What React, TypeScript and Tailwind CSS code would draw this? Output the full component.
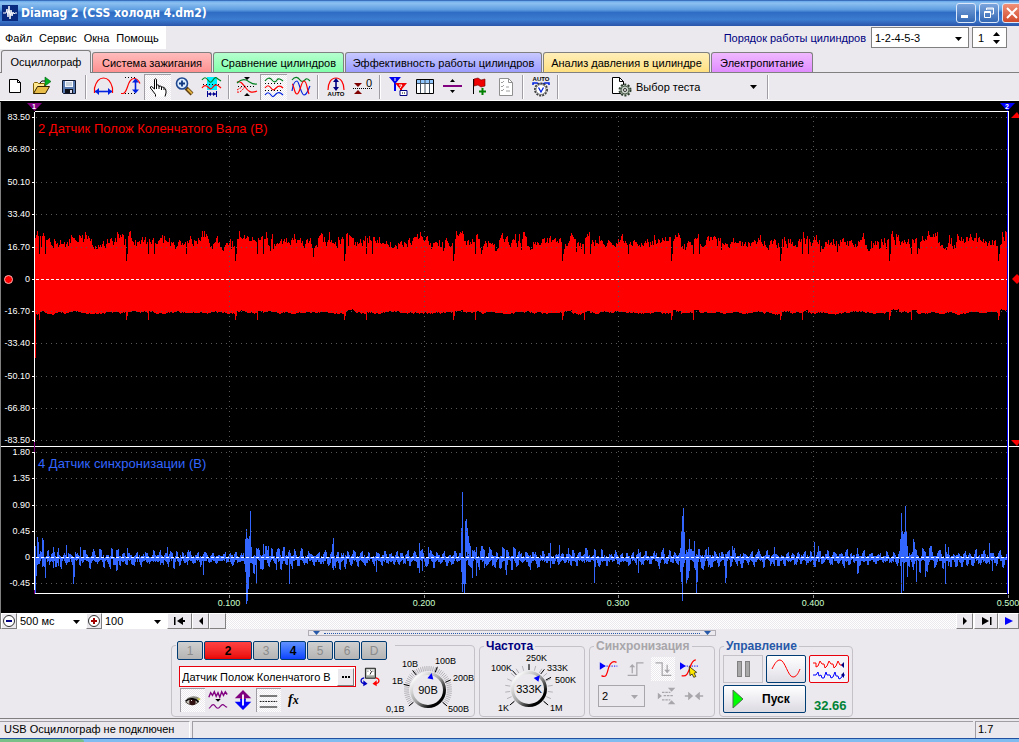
import { useState } from 'react';
import type { ReactNode } from 'react';
import { clsx } from 'clsx';

interface Tab {
  label: string;
  className: string;
}

const tabs: Tab[] = [
  { label: 'Осциллограф', className: 'w-[90px]' },
  { label: 'Система зажигания', className: 'w-[120px] bg-linear-to-b from-[#ffbcbc] to-[#ff9090]' },
  { label: 'Сравнение цилиндров', className: 'w-[131px] bg-linear-to-b from-[#b4ffce] to-[#80ffaa]' },
  { label: 'Эффективность работы цилиндров', className: 'w-[197px] bg-linear-to-b from-[#c8c8ff] to-[#9c9cff]' },
  { label: 'Анализ давления в цилиндре', className: 'w-[167px] bg-linear-to-b from-[#ffeeb8] to-[#ffe080]' },
  { label: 'Электропитание', className: 'w-[102px] bg-linear-to-b from-[#f0b8ff] to-[#e08cff]' },
];

const menuItems = ['Файл', 'Сервис', 'Окна', 'Помощь'];

const dither = 'bg-[repeating-conic-gradient(#ffffff_0_25%,#ebe9ed_0_50%)] bg-[length:2px_2px]';

/* ---------- Icons ---------- */

interface IconProps {
  children: ReactNode;
  size?: number;
}

function Icon({ children, size = 24 }: IconProps) {
  return (
    <svg width={size} height={size} viewBox="0 0 24 24" fill="none" className="shrink-0" aria-hidden="true">
      {children}
    </svg>
  );
}

const NewIcon = (
  <Icon>
    <path d="M6.5 4.5h8l3 3v10h-11z" fill="#fff" stroke="#000" />
    <path d="M14.5 4.5v3h3" stroke="#000" />
  </Icon>
);

const OpenIcon = (
  <Icon>
    <path d="M3.5 18.5v-10l1-1h3l1 1h6v3" fill="#ffe890" stroke="#806000" />
    <path d="M3.5 18.5l4-7h12l-4 7z" fill="#e8bc48" stroke="#302000" />
    <path d="M15 2l6 4.5-6 4.5z" fill="#00b020" stroke="#006010" strokeWidth=".6" />
    <path d="M10 8q1-3 5-2" stroke="#000" />
  </Icon>
);

const SaveIcon = (
  <Icon>
    <path d="M5.5 5.5h13v13h-12l-1-1z" fill="#5878b0" stroke="#101830" />
    <path d="M8 6h8v6H8z" fill="#f4f6ff" />
    <path d="M9 8h6M9 10h6" stroke="#9ab" />
    <path d="M8 14h8v4H8z" fill="#101018" />
    <path d="M13 15h2v3h-2z" fill="#dde" />
  </Icon>
);

const WidthIcon = (
  <Icon>
    <path d="M2.5 18V13C4 7 7 3 11.500 3S19 7 20.500 13v5" stroke="#f00" strokeWidth="1.2" />
    <path d="M3 16.500h17" stroke="#0020e0" strokeWidth="1.6" />
    <path d="M3 16.500l4-3.500v7zM20 16.500l-4-3.500v7z" fill="#0020e0" />
  </Icon>
);

const HeightIcon = (
  <Icon>
    <path d="M6 2.500h12M3 18.500h14" stroke="#000" strokeDasharray="1 2" />
    <path d="M2 18.500h2c5 0 4-15 11-15 4 0 5 3 6 5" stroke="#f00" strokeWidth="1.2" />
    <path d="M16.500 5v12" stroke="#0020e0" strokeWidth="1.6" />
    <path d="M16.500 3.500l-3.500 4h7zM16.500 18.500l-3.500-4h7z" fill="#0020e0" />
  </Icon>
);

const HandIcon = (
  <Icon>
    <path
      d="M9.500 21.500v-2l-5-6.500q-.5-1.500 1-1.500l3 2.500V4.500q1-1.500 2 0v6q1-1.300 2.500 0v1q1-1 2.500 0v1q1.200-1 2.500 0 2 1 2 3.500v2l-1 3.500"
      fill="#fff"
      stroke="#000"
    />
    <path d="M10.500 9v5M13 11v3M15.500 12v3M18 13v2" stroke="#000" />
  </Icon>
);

const ZoomIcon = (
  <Icon>
    <path d="M13 13l6 6" stroke="#604010" strokeWidth="4" />
    <path d="M14.500 14l4.500 4.500" stroke="#e0b040" strokeWidth="1.800" />
    <circle cx="9" cy="8.500" r="5.500" fill="#dcecff" stroke="#204890" strokeWidth="1.6" />
    <path d="M6 8.500h6M9 5.500v6" stroke="#103880" strokeWidth="1.800" />
  </Icon>
);

const FragmentIcon = (
  <Icon>
    <path d="M7 2h10v13H7z" fill="#00f0ff" />
    <path d="M2 5c2-3 4-3 6 0s3 3 5 0 3-3 5-1l3 2" stroke="#008020" strokeWidth="1.2" />
    <path d="M3 9.500h18" stroke="#000" strokeDasharray="1 2" />
    <path d="M2 13c2-3 4-3 6-1s3 3 5 0 4-3 8 1" stroke="#f00" strokeWidth="1.2" />
    <path d="M7.500 16v6M16.500 16v6M8 19h8" stroke="#000090" />
    <path d="M8 19l3-2v4zM16 19l-3-2v4z" fill="#000090" />
  </Icon>
);

const AlignIcon = (
  <Icon>
    <path d="M2 7c4-1 5 1 8 5s6 7 12 4" stroke="#f00" strokeWidth="1.2" />
    <path d="M2 8c3-3 6-4 9-3s6 5 11 4" stroke="#008020" strokeWidth="1.2" />
    <path d="M2 17c4 1 6-3 9-7M2 15l5-3" stroke="#f00" strokeDasharray="2 1" />
    <path d="M3 11.500h18" stroke="#000" strokeDasharray="1 2" />
    <path d="M9 2h6l-3 3zM9 21h6l-3-3z" fill="#000" />
  </Icon>
);

const StackedIcon = (
  <Icon>
    <path d="M3 6c2-3 5-4 7-1s4 2 5 0 4-1 6 1" stroke="#008020" strokeWidth="1.2" />
    <path d="M3 8.500h18M3 15.500h18" stroke="#000" strokeDasharray="1 2" />
    <path d="M3 13c2-3 4-3 6 0s3 2 5 0 4-3 7 0" stroke="#f00" strokeWidth="1.2" />
    <path d="M3 20c2-3 4-3 6 0s3 1 5-1 4-2 7 1" stroke="#0020e0" strokeWidth="1.2" />
  </Icon>
);

const OverlapIcon = (
  <Icon>
    <path d="M3 5c3-4 6-3 8 0s5 0 6-1 3 1 4 2" stroke="#008020" strokeWidth="1.2" />
    <path d="M3 16C4 9 6 6 8 6s4 14 7 14 4-5 6-9" stroke="#0020e0" strokeWidth="1.2" />
    <path d="M3 9c2 0 2 10 5 10s4-13 7-13 3 9 5 13" stroke="#f00" strokeWidth="1.2" />
  </Icon>
);

const AutoHeightIcon = (
  <Icon>
    <path d="M4 15C4 8 7 3 12 3s8 5 8 12" stroke="#f00" strokeWidth="1.2" />
    <path d="M12 5v9" stroke="#000080" strokeWidth="1.6" />
    <path d="M12 3l-3 4h6zM12 16l-3-4h6z" fill="#000080" />
    <text x="12" y="21" textAnchor="middle" fontSize="6" fontWeight="700" fill="#000">
      AUTO
    </text>
  </Icon>
);

const ZeroIcon = (
  <Icon>
    <path d="M2 13.500h20" stroke="#000" strokeDasharray="1 1" />
    <path d="M3 8h8l-4 4zM3 19h8l-4-4z" fill="#800000" />
    <text x="18" y="12" textAnchor="middle" fontSize="11" fill="#000">
      0
    </text>
  </Icon>
);

const MarkersIcon = (
  <Icon>
    <path d="M3 2h12l-5 6v8H8V8z" fill="#0000f0" />
    <path d="M9 8h12l-5 6v5h-2v-5z" fill="#f00000" />
    <path d="M14 15.500h7v5h-7z" fill="#fff" stroke="#000080" />
    <path d="M16 18h1M18 18h1" stroke="#000" />
    <path d="M9 3v3M13 10h3l-2 3" stroke="#fff" />
  </Icon>
);

const TableIcon = (
  <Icon>
    <path d="M3.500 4.500h17v14h-17z" fill="#fff" stroke="#000" />
    <path d="M4 5h16v3H4z" fill="#90c8ff" />
    <path d="M4 8.500h16M7.500 5v13M12 5v13M16.500 5v13" stroke="#405060" />
  </Icon>
);

const SplitIcon = (
  <Icon>
    <path d="M3 10h19v2H3z" fill="#800080" />
    <path d="M10 7l2.500-3L15 7zM10 15l2.500 3 2.500-3z" fill="#000" />
  </Icon>
);

const FlagIcon = (
  <Icon>
    <path d="M6.500 4v15" stroke="#000" />
    <path d="M7 4l4-1 3 2 4-1v7l-4 1-3-2-4 1z" fill="#f00000" stroke="#600" strokeWidth=".6" />
    <path d="M15.500 13v7M12 16.500h7" stroke="#008000" strokeWidth="2" />
  </Icon>
);

const ReportIcon = (
  <Icon>
    <path d="M5.500 3.500h9l4 4v13h-13z" fill="#fff" stroke="#909090" />
    <path d="M14.500 3.500v4h4" stroke="#909090" />
    <path d="M7 7l1 1 2-2M7 11l1 1 2-2M7 15l1 1 2-2M12 12h3M12 16h4" stroke="#a0a0a0" />
  </Icon>
);

const AutoGaugeIcon = (
  <Icon>
    <text x="12" y="6" textAnchor="middle" fontSize="6" fontWeight="700" fill="#000">
      AUTO
    </text>
    <path d="M4 10V8h4l2 1h4l2-1h4v2" stroke="#0020e0" strokeWidth="1.500" />
    <circle cx="12" cy="14.500" r="6" fill="#fff" stroke="#404040" strokeWidth="2" strokeDasharray="2 1" />
    <circle cx="12" cy="14.500" r="5" fill="#fff" stroke="#808080" />
    <path d="M9.500 12.500L12 17l2.500-4.500" stroke="#0020e0" strokeWidth="1.300" />
  </Icon>
);

const TestIcon = (
  <Icon>
    <path d="M4.500 2.500h7l4 4v12h-11z" fill="#fff" stroke="#000" />
    <path d="M11.500 2.500v4h4" stroke="#000" />
    <circle cx="17" cy="15" r="5.500" fill="#b8c4b8" stroke="#304030" strokeWidth="2" strokeDasharray="2 1.500" />
    <circle cx="17" cy="15" r="4" fill="#c8d2c8" stroke="#506050" />
    <circle cx="17" cy="15" r="1.500" fill="#fff" stroke="#000" strokeWidth=".8" />
  </Icon>
);

const SwapIcon = (
  <Icon size={20}>
    <path d="M6.500 1.500h12v12h-12z" fill="#a0a8a0" stroke="#000" />
    <path d="M8 3h9v7H8z" fill="#fff" />
    <path d="M9 5h1M12 4h1M15 5h1M12 9l2-4" stroke="#000" />
    <path d="M5 13c-5 1-5 6 0 7" stroke="#0000c0" strokeWidth="1.500" />
    <path d="M4 16l5 4-5 3z" fill="#0000c0" />
    <path d="M19 13c5 1 5 6 0 7" stroke="#f00" strokeWidth="1.500" />
    <path d="M20 16l-5 4 5 3z" fill="#f00" />
  </Icon>
);

const EyeIcon = (
  <Icon size={22}>
    <path d="M6 10c4-4 11-4 14-1l-1 5-4-2z" fill="#8a8a80" />
    <path d="M5 13c4-4 10-4 14 0-4 4-10 4-14 0z" fill="#c8c4bc" stroke="#403830" />
    <circle cx="12.500" cy="13" r="3.500" fill="#301010" />
    <path d="M11 11h1v1h-1z" fill="#fff" />
    <path d="M18 9h3v2h-3z" fill="#c8c850" />
    <path d="M5 12c4-4 11-3 14 1" stroke="#000" strokeWidth="1.500" />
  </Icon>
);

const SmoothIcon = (
  <Icon size={22}>
    <path d="M2 9l2-5 2 3 2-4 2 5 2-4 2 5 2-6 2 4 2-4 2 3" stroke="#800080" strokeWidth="1.500" />
    <path d="M9 11h6l-3 3z" fill="#000" />
    <path d="M2 21c2 0 2-4 5-4 2 0 2 4 5 4 2 0 3-4 5-4 2 0 2 2 5 3" stroke="#800080" strokeWidth="1.200" />
  </Icon>
);

const MoveIcon = (
  <Icon size={22}>
    <path d="M12 1l9 9h-6v2H9v-2H3z" fill="#800080" />
    <path d="M12 23l9-9h-6v-3H9v3H3z" fill="#0000ff" />
    <path d="M12 6v12" stroke="#fff" strokeWidth="2" />
  </Icon>
);

const LinesIcon = (
  <Icon size={22}>
    <path d="M3 6.500h19M3 18.500h19" stroke="#000" strokeWidth="1.200" />
    <path d="M3 12.500h19" stroke="#000" strokeDasharray="2 1" />
  </Icon>
);

const TriggerIcon = (
  <Icon size={20}>
    <path d="M3 8.500h19" stroke="#0000ff" strokeDasharray="1.500 1.500" strokeWidth="1.200" />
    <path d="M1 4l7 4.500L1 13z" fill="#0000ff" />
    <path d="M3 20c7 4 7-6 9-11s5-7 9-5" stroke="#f00" strokeWidth="1.500" />
  </Icon>
);

const RiseIcon = (
  <Icon size={20}>
    <path d="M2 19.500h11v-15h8M7.500 17V8" stroke="#a8a6aa" strokeWidth="1.500" />
    <path d="M4 10l3.500-4L11 10z" fill="#a8a6aa" />
  </Icon>
);

const FallIcon = (
  <Icon size={20}>
    <path d="M3 4.500h8v15h11M17 7v9" stroke="#a8a6aa" strokeWidth="1.500" />
    <path d="M13.500 13l3.500 4 3.500-4z" fill="#a8a6aa" />
  </Icon>
);

const TriggerPickIcon = (
  <Icon size={20}>
    <path d="M2 8.500h20" stroke="#0000ff" strokeDasharray="1.500 1.500" strokeWidth="1.200" />
    <path d="M0 4l7 4.500L0 13z" fill="#0000ff" />
    <path d="M2 20c6 2 8-4 10-10s4-9 7-9" stroke="#f00" strokeWidth="1.500" />
    <path d="M11 9l9 7-3 1 2 4-2.500 1-2-4-2.500 2z" fill="#ffe800" stroke="#000" strokeWidth=".8" />
  </Icon>
);

const LevelsIcon = (
  <Icon size={20}>
    <path d="M6 7.500h10M8 11.500h12M6 16.500h10" stroke="#a8a6aa" strokeWidth="1.500" strokeDasharray="3 1" />
    <path d="M1 8l5 4-5 4zM13 2h9l-4.500 5zM13 22h9l-4.500-5z" fill="#a8a6aa" />
  </Icon>
);

const ConvergeIcon = (
  <Icon size={20}>
    <path d="M1 12h6M17 12h6" stroke="#a8a6aa" strokeWidth="2" />
    <path d="M5 7l6 5-6 5zM19 7l-6 5 6 5z" fill="#a8a6aa" />
  </Icon>
);

/* ---------- Toolbar ---------- */

interface Tool {
  label: string;
  icon: ReactNode;
  pressed?: boolean;
}

const toolGroups: Tool[][] = [
  [
    { label: 'Новый', icon: NewIcon },
    { label: 'Открыть', icon: OpenIcon },
    { label: 'Сохранить', icon: SaveIcon },
  ],
  [
    { label: 'Ширина', icon: WidthIcon },
    { label: 'Высота', icon: HeightIcon },
    { label: 'Рука', icon: HandIcon, pressed: true },
    { label: 'Увеличить', icon: ZoomIcon },
    { label: 'Фрагмент', icon: FragmentIcon },
  ],
  [
    { label: 'Совместить', icon: AlignIcon },
    { label: 'Раздельно', icon: StackedIcon, pressed: true },
    { label: 'Вместе', icon: OverlapIcon },
  ],
  [
    { label: 'Авто', icon: AutoHeightIcon },
    { label: 'Ноль', icon: ZeroIcon },
  ],
  [
    { label: 'Маркеры', icon: MarkersIcon },
    { label: 'Таблица', icon: TableIcon },
    { label: 'Разделитель', icon: SplitIcon },
    { label: 'Флаг', icon: FlagIcon },
    { label: 'Отчёт', icon: ReportIcon },
  ],
  [{ label: 'Автоизмерение', icon: AutoGaugeIcon }],
];

function ToolButton({ label, icon, pressed }: Tool) {
  return (
    <button
      aria-label={label}
      aria-pressed={pressed}
      className={clsx(
        'flex h-[26px] w-[27px] items-center justify-center',
        pressed && ['border-t border-l border-[#a09ea4]', dither]
      )}
    >
      {icon}
    </button>
  );
}

function Separator() {
  return <div className="mx-[3px] h-6 w-[2px] border-l border-[#a09ea4] bg-white" />;
}

function Caret({ className }: { className?: string }) {
  return (
    <svg width="7" height="4" viewBox="0 0 7 4" className={className} aria-hidden="true">
      <path d="M0 0h7L3.500 4z" fill="currentColor" />
    </svg>
  );
}

interface DropDownProps {
  label: string;
  value: string;
  id?: string;
  className?: string;
  caretClass?: string;
}

function DropDown({ label, value, id, className, caretClass }: DropDownProps) {
  return (
    <div className={clsx('relative', className)}>
      <select id={id} aria-label={label} className="h-full w-full appearance-none pl-[3px] leading-4 outline-none">
        <option>{value}</option>
      </select>
      <Caret className={clsx('pointer-events-none absolute top-1/2 right-[6px] -mt-[1px]', caretClass)} />
    </div>
  );
}

/* ---------- Signal data ---------- */

// small repeatable generator so that the traces stay the same on every render
function makeRandom(seed: number) {
  let s = seed;
  return () => {
    s = (s * 1664525 + 1013904223) % 4294967296;
    return s / 4294967296;
  };
}

const ORIGIN = 35;
const END = 1007;
const CRANK_ZERO = 178;
const SYNC_ZERO = 456;

function crankPath() {
  const rnd = makeRandom(7);
  let d = '';
  let level = 0;
  let low = 0;
  for (let x = ORIGIN; x < END; x++) {
    const phase = (x - 17 + 109) % 109;
    level = level * 0.6 + (rnd() - 0.5) * 9;
    low = low * 0.8 + (rnd() - 0.5) * 1.6;
    let top = 140 + Math.sin(x / 6.8) * 2 + level;
    let bottom = 211 + low;
    if (rnd() > 0.92) top -= 5;
    if (rnd() > 0.95) top += 7;
    if (phase === 0) {
      top = 159;
      bottom = 218;
    } else if (phase === 1) {
      top = 152;
      bottom = 214;
    } else if (phase > 1 && phase < 10) {
      top -= 5;
      bottom -= 2;
    } else if (phase === 22 || phase === 28) {
      top = 152;
      bottom = phase === 22 ? 218 : bottom;
    } else if (phase > 22 && phase < 28) {
      top -= 4;
      bottom -= 2;
    }
    d += `M${x} ${Math.round(Math.max(top, 129))}V${Math.round(bottom)}`;
  }
  return d + 'M35 211V256';
}

// x, top, bottom of the pulses that stand out from the noise
const pulses = [
  [35, 444, 492], [36, 455, 474], [37, 435, 460], [38, 440, 462], [42, 436, 465], [43, 438, 464], [45, 455, 476],
  [53, 445, 466], [58, 446, 464], [66, 443, 455], [73, 455, 482], [74, 455, 475], [80, 445, 463],
  [116, 450, 469], [117, 448, 468], [127, 446, 462], [160, 448, 463], [167, 445, 462], [203, 452, 473],
  [245, 437, 470], [246, 427, 502], [247, 436, 499], [248, 437, 487], [249, 434, 475], [250, 409, 461],
  [251, 445, 460], [256, 450, 481], [263, 442, 460], [268, 444, 464], [276, 450, 468], [289, 448, 482],
  [332, 442, 466], [333, 436, 468], [376, 450, 470], [419, 441, 471], [422, 455, 469], [428, 445, 462],
  [461, 426, 470], [462, 390, 490], [463, 456, 482], [464, 458, 491], [465, 419, 482], [466, 417, 450],
  [467, 426, 452], [468, 434, 452], [469, 441, 456], [470, 444, 458], [472, 448, 476], [476, 445, 474],
  [484, 448, 466], [506, 448, 473], [550, 441, 466], [559, 443, 462], [568, 446, 461], [594, 448, 481],
  [595, 452, 465], [638, 447, 471], [680, 446, 470], [681, 430, 480], [682, 414, 499], [683, 406, 460],
  [684, 430, 458], [686, 448, 482], [687, 450, 478], [688, 447, 476], [689, 437, 469], [694, 439, 460],
  [696, 452, 491], [697, 455, 480], [708, 445, 465], [719, 451, 463], [725, 452, 481], [726, 452, 476],
  [732, 444, 460], [774, 445, 464], [814, 440, 460], [818, 444, 460], [857, 446, 472], [858, 455, 471],
  [900, 437, 464], [901, 411, 491], [902, 429, 456], [903, 432, 489], [904, 430, 456], [905, 404, 460],
  [906, 429, 460], [907, 444, 475], [913, 437, 468], [914, 440, 462], [916, 448, 480], [925, 450, 475],
  [945, 442, 482], [948, 445, 464], [989, 441, 458], [992, 452, 469],
];

function syncPath() {
  const rnd = makeRandom(21);
  const bursts = [35, 250, 465, 684, 905];
  let d = '';
  let prev = 0;
  for (let x = ORIGIN; x < END; x++) {
    const last = bursts.filter((b) => b <= x).pop() ?? ORIGIN;
    const amp = 5 + 7 * Math.exp(-(x - last) / 50) + (Math.sin(x / 13) + 1) * 1.5;
    const next = Math.sin(x * 0.95 + Math.sin(x / 9) * 2) * amp * rnd();
    const top = SYNC_ZERO + Math.min(prev, next, 0) - rnd() * 3;
    const bottom = SYNC_ZERO + 1 + Math.max(prev, next, 0) + rnd() * 3;
    prev = next;
    d += `M${x} ${Math.round(top)}V${Math.round(bottom)}`;
  }
  pulses.forEach(([x, top, bottom]) => {
    d += `M${x} ${top}V${bottom}`;
  });
  return d;
}

const crank = crankPath();
const sync = syncPath();

const crankScale: [string, number][] = [
  ['83.50', 16], ['66.80', 48], ['50.10', 81], ['33.40', 113], ['16.70', 146], ['0', 178],
  ['-16.70', 210], ['-33.40', 242], ['-50.10', 275], ['-66.80', 307], ['-83.50', 339],
];

const syncScale: [string, number][] = [
  ['1.80', 351], ['1.35', 377], ['0.90', 404], ['0.45', 430], ['0', 456], ['-0.45', 482],
];

const timeScale: [string, number][] = [
  ['0.100', 229], ['0.200', 424], ['0.300', 618], ['0.400', 813], ['0.500', 1008],
];

function Scope() {
  const rows = [...crankScale, ...syncScale];
  return (
    <svg viewBox="0 0 1019 512" className="block w-full bg-black" role="img" aria-label="Осциллограмма">
      <g shapeRendering="crispEdges" transform="translate(0.5 0.5)">
        <path d={crank} stroke="#ff0000" />
        <path d={sync} stroke="#3366ff" />
        {rows.map(([label, y]) => (
          <path key={y} d={label === '0' ? '' : `M35 ${y}H1006`} stroke="#585858" strokeDasharray="1 4" />
        ))}
        {timeScale.slice(0, 4).map(([, x]) => (
          <path key={x} d={`M${x} 14V492`} stroke="#585858" strokeDasharray="1 4" />
        ))}
        <path d={`M35 ${CRANK_ZERO}H1006M35 ${SYNC_ZERO}H1006`} stroke="#fff" strokeDasharray="3 2" />
        {rows.map(([, y]) => (
          <path key={y} d={`M31 ${y}H34`} stroke="#fff" />
        ))}
        {timeScale.map(([, x]) => (
          <path key={x} d={`M${x} 493V496`} stroke="#909090" />
        ))}
        <path d="M34 10V492M34 10H1008M0 345H1018M34 492H1008M1008 10V492" stroke="#fff" />
        <path d="M1007 10V492" stroke="#0000ff" />
        <path d="M34 340V350M34 488V492" stroke="#800080" />
        <path d="M0 0V512" stroke="#808080" />
      </g>
      <path d="M27 2h15l-7.500 8z" fill="#800080" />
      <path d="M1000 2h15l-7.500 8z" fill="#0000ff" />
      <path d="M1011 17h8v-3l-2-3zM1011 339h8v3l-2 3z" fill="#ff0000" />
      <path d="M1012 178l5-5 2 2v6l-2 2z" fill="#ff0000" />
      <circle cx="8.500" cy="178.500" r="4" fill="#ff0000" stroke="#ffb0b0" />
      <g fill="#fff" fontSize="7" fontWeight="700" textAnchor="middle">
        <text x="34" y="8">1</text>
        <text x="1007" y="8">2</text>
      </g>
      <g fill="#fff" fontSize="9" textAnchor="end">
        {rows.map(([label, y]) => (
          <text key={y} x="30" y={y + 3}>
            {label}
          </text>
        ))}
      </g>
      <g fill="#ccffcc" fontSize="9" textAnchor="middle">
        {timeScale.map(([label, x]) => (
          <text key={x} x={x} y="505">
            {label}
          </text>
        ))}
      </g>
      <text x="38" y="32" fontSize="13" fill="#ff0000">
        2 Датчик Полож Коленчатого Вала (В)
      </text>
      <text x="38" y="367" fontSize="13" fill="#3366ff">
        4 Датчик синхронизации (В)
      </text>
    </svg>
  );
}

/* ---------- Control panel ---------- */

interface KnobProps {
  id: string;
  label: string;
  value: string;
  pointer: number;
  ticks: number;
  major: number[];
  marks: [string, number, number][];
}

function Knob({ id, label, value, pointer, ticks, major, marks }: KnobProps) {
  const ray = (deg: number, from: number, to: number) => {
    const a = (deg * Math.PI) / 180;
    return `M${45 + Math.sin(a) * from} ${38 - Math.cos(a) * from}L${45 + Math.sin(a) * to} ${38 - Math.cos(a) * to}`;
  };
  const minor = Array.from({ length: ticks }, (_, i) => ray(-130 + (260 * i) / (ticks - 1), 19, 24)).join('');
  return (
    <svg width="94" height="64" viewBox="0 0 94 64" role="img" aria-label={label} className="shrink-0">
      <defs>
        <linearGradient id={id} x1="0" y1="0" x2="1" y2="1">
          <stop offset="0.1" stopColor="#fff" />
          <stop offset="0.5" stopColor="#a0a0a0" />
          <stop offset="0.8" stopColor="#000" />
        </linearGradient>
      </defs>
      <path d={minor} stroke="#b4b2b6" />
      <path d={major.map((deg) => ray(deg, 19, 25)).join('')} stroke="#000" />
      <circle cx="45" cy="38" r="16.500" fill="#ebe9ed" stroke={`url(#${id})`} strokeWidth="3" />
      <path d="M45 20.500l3 6h-6z" fill="#0000ff" transform={`rotate(${pointer} 45 38)`} />
      <text x="45" y="42" textAnchor="middle" fontSize="11">
        {value}
      </text>
      <g fontSize="9">
        {marks.map(([text, x, y]) => (
          <text key={text} x={x} y={y}>
            {text}
          </text>
        ))}
      </g>
    </svg>
  );
}

const idleChannel = 'w-[26px] from-[#d0d0d0] to-[#b4b4b4] text-[#8c8c8c]';

const channels = [
  { name: '1', className: idleChannel },
  { name: '2', className: 'w-12 from-[#ff4040] to-[#e80000] font-bold text-black' },
  { name: '3', className: idleChannel },
  { name: '4', className: 'w-[26px] from-[#6090ff] to-[#1040ff] font-bold text-black' },
  { name: '5', className: idleChannel },
  { name: '6', className: idleChannel },
  { name: 'D', className: idleChannel },
];

function ChannelPanel() {
  const [name, setName] = useState('Датчик Полож Коленчатого В');
  return (
    <section className="mt-[7px] flex h-[72px] w-[304px] rounded border border-[#c4c2c8]">
      <div className="-mt-[5px] w-[211px] pl-1">
        <div className="flex w-[219px] gap-[1px] bg-[#ebe9ed] pl-[1px]">
          {channels.map((channel) => (
            <button
              key={channel.name}
              className={clsx(
                'h-[19px] rounded-xs border border-[#003c74] bg-linear-to-b text-xs leading-4',
                channel.className
              )}
            >
              {channel.name}
            </button>
          ))}
        </div>
        <div className="mt-[6px] flex items-center gap-1 pl-[3px]">
          <div className="flex h-[21px] w-[177px] items-center border border-red-600 bg-white pr-[1px]">
            <input
              aria-label="Название канала"
              value={name}
              onChange={(e) => setName(e.target.value)}
              className="min-w-0 flex-1 pl-[2px] outline-none"
            />
            <button
              aria-label="Выбрать датчик"
              className="flex h-[18px] w-[17px] items-center justify-center gap-[1px] border border-white border-r-[#808080] border-b-[#808080] bg-[#ebe9ed]"
            >
              <span className="size-[2px] bg-black" />
              <span className="size-[2px] bg-black" />
              <span className="size-[2px] bg-black" />
            </button>
          </div>
          <button aria-label="Поменять каналы">{SwapIcon}</button>
        </div>
        <div className="mt-[1px] flex items-center gap-[1px] pl-1">
          <button aria-label="Показать" className={clsx('h-6 w-[25px] border-t border-l border-[#a09ea4]', dither)}>
            {EyeIcon}
          </button>
          <button aria-label="Сгладить" className="ml-[1px]">{SmoothIcon}</button>
          <button aria-label="Сдвиг" className="ml-[2px]">{MoveIcon}</button>
          <button
            aria-label="Уровни"
            className={clsx('ml-[1px] h-6 w-[25px] border-t border-l border-[#a09ea4]', dither)}
          >
            {LinesIcon}
          </button>
          <button aria-label="Функция" className="ml-[6px] font-['Liberation_Serif',serif] text-sm leading-5 font-bold italic">
            f<span className="text-xs">x</span>
          </button>
        </div>
      </div>
      <div className="mt-[6px]">
        <Knob
          id="voltage"
          label="Диапазон напряжения"
          value="90В"
          pointer={12}
          ticks={50}
          major={[-130, -77, -38, 22, 66, 130]}
          marks={[
            ['10В', 19, 15],
            ['100В', 52, 12],
            ['1В', 9, 32],
            ['200В', 70, 29],
            ['0,1В', 3, 60],
            ['500В', 65, 60],
          ]}
        />
      </div>
    </section>
  );
}

interface GroupProps {
  title: string;
  className?: string;
  legendClass: string;
  children: ReactNode;
}

function Group({ title, className, legendClass, children }: GroupProps) {
  return (
    <fieldset className={clsx('mt-[2px] h-[77px] rounded border border-[#c4c2c8]', className)}>
      <legend className={clsx('ml-1 px-[2px] text-xs leading-3 font-bold', legendClass)}>{title}</legend>
      {children}
    </fieldset>
  );
}

function RunPanel() {
  return (
    <Group title="Управление" className="w-[134px]" legendClass="text-[#2858a8]">
      <div className="mt-[3px] flex gap-[3px] pl-[3px]">
        <button
          aria-label="Пауза"
          className="flex h-7 w-10 items-center justify-center gap-[3px] border border-[#c4c2c8]"
        >
          <span className="h-4 w-[5px] border border-[#808080] bg-[#a8a8a8]" />
          <span className="h-4 w-[5px] border border-[#808080] bg-[#a8a8a8]" />
        </button>
        <button
          aria-label="Однократно"
          className="flex h-7 w-10 items-center justify-center rounded-xs border border-[#003c74] bg-linear-to-b from-white to-[#e0dee6]"
        >
          <svg width="30" height="22" viewBox="0 0 30 22" fill="none" aria-hidden="true">
            <path d="M1 11C4 5 6 2 9 2c5 0 8 17 13 17 3 0 5-3 7-8" stroke="#f00" />
          </svg>
        </button>
        <button
          aria-label="Непрерывно"
          className="flex h-7 w-10 items-center justify-center rounded-xs border border-red-600 bg-[#f6f4f8]"
        >
          <svg width="36" height="24" viewBox="0 0 36 24" fill="none" aria-hidden="true">
            <path d="M2 6h3v4l2-1 2-5 2 3h2l1 4 2-2 2-5 2 3h2l1 4 2-2 2-5 2 4h3" stroke="#f00" />
            <path d="M2 18h3l2-3 1 4 2-1 1 3h2l2-6 1 3h3l1 3 2-1 2-5 1 4h2l1 3 2-1 2-3h2" stroke="#00f" />
            <path d="M33 5v6l-3-3zM33 15v6l-3-3z" fill="#000080" />
          </svg>
        </button>
      </div>
      <div className="mt-[2px] flex gap-[8px] pl-[3px]">
        <button className="flex h-7 w-[83px] items-center rounded-xs border border-[#003c74] bg-linear-to-b from-white to-[#dcdae2] pl-2 text-xs font-bold">
          <svg width="12" height="20" viewBox="0 0 12 20" aria-hidden="true">
            <path d="M1 1l10 9-10 9z" fill="#00ff00" stroke="#507050" />
          </svg>
          <span className="ml-[18px]">Пуск</span>
        </button>
        <output className="self-end text-[13px] leading-[14px] font-bold text-green-700">32.66</output>
      </div>
    </Group>
  );
}

function ScrollButton({ label, className, children }: { label: string; className: string; children?: ReactNode }) {
  return (
    <button
      aria-label={label}
      className={clsx(
        'flex h-4 items-center justify-center border border-white border-r-[#808080] border-b-[#808080] bg-[#ebe9ed]',
        className
      )}
    >
      {children}
    </button>
  );
}

function TimeBar() {
  return (
    <div className="flex h-4 border-l border-[#808080] bg-white">
      <ScrollButton label="Сжать" className="w-4">
        <svg width="14" height="14" viewBox="0 0 14 14" fill="none" aria-hidden="true">
          <circle cx="7" cy="7" r="5.500" fill="#fff" stroke="#303030" />
          <path d="M4 7h6" stroke="#000080" strokeWidth="2" />
        </svg>
      </ScrollButton>
      <DropDown label="Развёртка" value="500 мс" className="w-[69px] bg-white" />
      <ScrollButton label="Растянуть" className="w-4">
        <svg width="14" height="14" viewBox="0 0 14 14" fill="none" aria-hidden="true">
          <circle cx="7" cy="7" r="5.500" fill="#fff" stroke="#303030" />
          <path d="M4 7h6M7 4v6" stroke="#a00000" strokeWidth="2" />
        </svg>
      </ScrollButton>
      <DropDown label="Масштаб" value="100" className="w-[65px] bg-white" />
      <ScrollButton label="В начало" className="w-[25px]">
        <svg width="11" height="8" viewBox="0 0 11 8" aria-hidden="true">
          <path d="M0 0h1.500v8H0zM9 0v8L3 4zM9 3h2v2H9z" />
        </svg>
      </ScrollButton>
      <ScrollButton label="Назад" className="w-[17px]">
        <svg width="4" height="8" viewBox="0 0 4 8" aria-hidden="true">
          <path d="M4 0v8L0 4z" />
        </svg>
      </ScrollButton>
      <div className={clsx('flex-1', dither)}>
        <div className="h-4 w-[17px] border border-white border-r-[#808080] border-b-[#808080] bg-[#ebe9ed]" />
      </div>
      <ScrollButton label="Вперёд" className="w-[17px]">
        <svg width="4" height="8" viewBox="0 0 4 8" aria-hidden="true">
          <path d="M0 0v8l4-4z" />
        </svg>
      </ScrollButton>
      <ScrollButton label="В конец" className="ml-[1px] w-6">
        <svg width="11" height="8" viewBox="0 0 11 8" aria-hidden="true">
          <path d="M9 0h1.500v8H9zM1 0v8l7-4z" />
        </svg>
      </ScrollButton>
      <ScrollButton label="Воспроизвести" className="w-[21px]">
        <svg width="8" height="8" viewBox="0 0 8 8" aria-hidden="true">
          <path d="M0 0v8l8-4z" fill="#0000ff" />
        </svg>
      </ScrollButton>
    </div>
  );
}

function WindowButtons() {
  const base = 'flex size-5 items-center justify-center rounded-[3px] border border-[#dce8fa]';
  return (
    <div className="-mr-[3px] flex gap-[3px]">
      <button aria-label="Свернуть" className={clsx(base, 'bg-linear-to-b from-[#7aa4dc] to-[#3468b4]')}>
        <svg width="14" height="14" viewBox="0 0 14 14" aria-hidden="true">
          <path d="M2 9h7v3H2z" fill="#fff" />
        </svg>
      </button>
      <button aria-label="Восстановить" className={clsx(base, 'bg-linear-to-b from-[#7aa4dc] to-[#3468b4]')}>
        <svg width="14" height="14" viewBox="0 0 14 14" fill="none" stroke="#fff" aria-hidden="true">
          <path d="M4.500 4V2h7v6h-2M4.500 3h7M2.500 5.500h6v6h-6zM2.500 6.500h6" />
        </svg>
      </button>
      <button aria-label="Закрыть" className={clsx(base, 'bg-linear-to-b from-[#f09078] to-[#d04828]')}>
        <svg width="14" height="14" viewBox="0 0 14 14" stroke="#fff" strokeWidth="2" aria-hidden="true">
          <path d="M2 2l10 10M12 2L2 12" />
        </svg>
      </button>
    </div>
  );
}

export default function App() {
  const [cylinder, setCylinder] = useState('1');

  return (
    <div className="flex min-h-screen flex-col overflow-hidden bg-[#ebe9ed] font-['Liberation_Sans',Arial,sans-serif] text-[11px] leading-[14px] text-black">
      {/* Title bar */}
      <header className="flex h-[26px] items-center bg-[linear-gradient(#1c4aa0_0,#6cacec_5%,#8cc0f0_12%,#5c9ce0_38%,#2f6cc4_48%,#3c7cd0_75%,#2a54aa_100%)] pl-[2px]">
        <svg width="16" height="16" viewBox="0 0 16 16" fill="none" aria-hidden="true">
          <path d="M0 0h16v16H0z" fill="#0a2a80" />
          <path d="M1 8h3l1-4 1 8 1-11 1 13 1-9 1 6 1-4 1 2 1-1h2" stroke="#fff" />
        </svg>
        <h1 className="ml-[3px] flex-1 font-['DejaVu_Sans_Condensed','DejaVu_Sans',sans-serif] text-xs font-bold text-white">
          Diamag 2 (CSS холодн 4.dm2)
        </h1>
        <WindowButtons />
      </header>

      {/* Menu and firing order */}
      <div className="flex h-6 items-start justify-between pr-3">
        <nav className="flex h-[23px] w-[166px] items-center gap-[7px] bg-white pl-[5px]">
          {menuItems.map((item) => (
            <button key={item}>{item}</button>
          ))}
        </nav>
        <div className="flex items-center pt-[1px]">
          <label htmlFor="order" className="mr-[5px] text-[#000080]">
            Порядок работы цилиндров
          </label>
          <DropDown
            id="order"
            label="Порядок работы цилиндров"
            value="1-2-4-5-3"
            className="h-[21px] w-[98px] border border-[#808080] bg-white"
          />
          <div className="ml-[3px] flex h-[21px] w-[35px] items-center border border-[#808080] bg-white">
            <input
              aria-label="Номер цилиндра"
              value={cylinder}
              onChange={(e) => setCylinder(e.target.value)}
              className="w-5 pl-[5px] outline-none"
            />
            <svg width="7" height="14" viewBox="0 0 7 14" aria-hidden="true">
              <path d="M0 5l3.500-4L7 5zM0 9l3.500 4L7 9z" />
            </svg>
          </div>
        </div>
      </div>

      {/* Tabs */}
      <div role="tablist" className="flex h-[23px] items-end gap-[1px] border-b border-[#808080] pl-[1px]">
        {tabs.map((tab, i) => (
          <button
            key={tab.label}
            role="tab"
            aria-selected={i === 0}
            className={clsx(
              'rounded-t-[3px] border border-b-0 border-[#808080] text-center whitespace-nowrap',
              i === 0 ? '-mb-[1px] h-[23px] bg-[#ebe9ed]' : 'h-5',
              tab.className
            )}
          >
            {tab.label}
          </button>
        ))}
      </div>

      {/* Toolbar */}
      <div className="flex h-7 items-center border-b border-white pl-[1px]">
        {toolGroups.map((group, i) => (
          <div key={i} className="flex items-center">
            {group.map((tool) => (
              <ToolButton key={tool.label} {...tool} />
            ))}
            <Separator />
          </div>
        ))}
        <button className="ml-[46px] flex w-[156px] items-center">
          {TestIcon}
          <span className="ml-1 flex-1 text-left">Выбор теста</span>
          <Caret className="mr-[7px]" />
        </button>
        <Separator />
      </div>

      <main>
        <Scope />
        <TimeBar />
      </main>

      {/* Splitter and controls */}
      <div className="pl-[5px]">
        <div className="mx-auto mt-[1px] flex h-[6px] w-[408px] items-center gap-1 border border-[#b0aeb4] px-1 text-[#2858a8]">
          <Caret />
          <div className="flex-1 border-t border-dotted border-[#2858a8]" />
          <Caret />
        </div>
      </div>
      <div className="flex h-[83px] items-start justify-center gap-1 border-b border-[#808080] pt-[2px] pl-[5px]">
        <ChannelPanel />
        <Group title="Частота" className="w-[106px]" legendClass="text-[#000080]">
          <div className="-mt-[1px] pl-1">
            <Knob
              id="frequency"
              label="Частота"
              value="333K"
              pointer={38}
              ticks={17}
              major={[-130, -42, 0, 38, 62, 130]}
              marks={[
                ['100K', 7, 20],
                ['250K', 42, 10],
                ['333K', 63, 20],
                ['500K', 71, 32],
                ['1K', 14, 60],
                ['1M', 66, 60],
              ]}
            />
          </div>
        </Group>
        <Group title="Синхронизация" className="w-[126px]" legendClass="text-[#a8a6aa]">
          <div className="mt-[5px] flex items-center gap-[5px] pl-[9px]">
            <button aria-label="Уровень">{TriggerIcon}</button>
            <button aria-label="Фронт" className="ml-[2px]">{RiseIcon}</button>
            <button aria-label="Спад" className={clsx('flex h-6 w-6 items-center justify-center', dither)}>
              {FallIcon}
            </button>
            <button aria-label="Выбор уровня">{TriggerPickIcon}</button>
          </div>
          <div className="mt-1 flex items-center pl-2">
            <DropDown
              label="Канал синхронизации"
              value="2"
              className="mr-3 h-[22px] w-[47px] border border-[#a8a6aa]"
              caretClass="text-[#a8a6aa]"
            />
            <button aria-label="Границы">{LevelsIcon}</button>
            <button aria-label="Центр" className="ml-[7px]">{ConvergeIcon}</button>
          </div>
        </Group>
        <RunPanel />
      </div>

      {/* Status bar */}
      <footer className="flex h-[19px] items-stretch gap-[2px] pt-[2px]">
        <div className="w-[190px] border-t border-r border-[#a09ea4] border-r-white pl-1">
          USB Осциллограф не подключен
        </div>
        <div className="flex-1 border-t border-l border-[#a09ea4]" />
        <div className="w-11 border-t border-l border-[#a09ea4] pl-[2px]">1.7</div>
      </footer>
      <div className="flex h-1 border-t border-[#2050a0] bg-[#80bcf0]">
        <div className="w-[84px] rounded-tr bg-[#78c088]" />
      </div>
    </div>
  );
}
